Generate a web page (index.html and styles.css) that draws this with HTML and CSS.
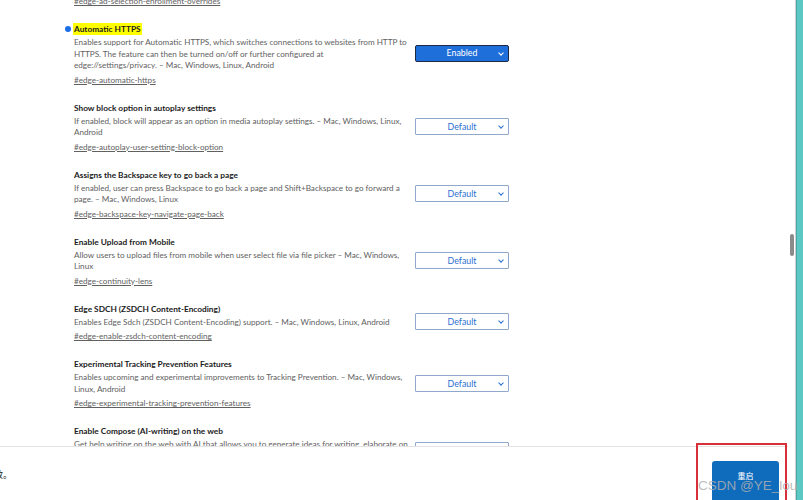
FILE: index.html
```html
<!DOCTYPE html>
<html>

<head>
    <link rel="stylesheet" href="styles.css">
</head>

<body>
    <div class="window">
        <div class="page">
            <div class="flags">
                <div class="tail">
                    <a class="flag-link" href="#">#edge-ad-selection-enrollment-overrides</a>
                </div>

                <div class="flag">
                    <div class="flag-text">
                        <div class="flag-title"><span class="dot"></span><mark>Automatic HTTPS</mark></div>
                        <div class="flag-desc">Enables support for Automatic HTTPS, which switches connections to websites from HTTP to HTTPS. The feature can then be turned on/off or further configured at<br>edge://settings/privacy. – Mac, Windows, Linux, Android</div>
                        <a class="flag-link" href="#">#edge-automatic-https</a>
                    </div>
                    <div class="select on">Enabled<span class="chev"></span></div>
                </div>

                <div class="flag">
                    <div class="flag-text">
                        <div class="flag-title">Show block option in autoplay settings</div>
                        <div class="flag-desc">If enabled, block will appear as an option in media autoplay settings. – Mac, Windows, Linux, Android</div>
                        <a class="flag-link" href="#">#edge-autoplay-user-setting-block-option</a>
                    </div>
                    <div class="select">Default<span class="chev"></span></div>
                </div>

                <div class="flag">
                    <div class="flag-text">
                        <div class="flag-title">Assigns the Backspace key to go back a page</div>
                        <div class="flag-desc">If enabled, user can press Backspace to go back a page and Shift+Backspace to go forward a page. – Mac, Windows, Linux</div>
                        <a class="flag-link" href="#">#edge-backspace-key-navigate-page-back</a>
                    </div>
                    <div class="select">Default<span class="chev"></span></div>
                </div>

                <div class="flag">
                    <div class="flag-text">
                        <div class="flag-title">Enable Upload from Mobile</div>
                        <div class="flag-desc">Allow users to upload files from mobile when user select file via file picker – Mac, Windows, Linux</div>
                        <a class="flag-link" href="#">#edge-continuity-lens</a>
                    </div>
                    <div class="select">Default<span class="chev"></span></div>
                </div>

                <div class="flag">
                    <div class="flag-text">
                        <div class="flag-title">Edge SDCH (ZSDCH Content-Encoding)</div>
                        <div class="flag-desc">Enables Edge Sdch (ZSDCH Content-Encoding) support. – Mac, Windows, Linux, Android</div>
                        <a class="flag-link" href="#">#edge-enable-zsdch-content-encoding</a>
                    </div>
                    <div class="select">Default<span class="chev"></span></div>
                </div>

                <div class="flag">
                    <div class="flag-text">
                        <div class="flag-title">Experimental Tracking Prevention Features</div>
                        <div class="flag-desc">Enables upcoming and experimental improvements to Tracking Prevention. – Mac, Windows, Linux, Android</div>
                        <a class="flag-link" href="#">#edge-experimental-tracking-prevention-features</a>
                    </div>
                    <div class="select">Default<span class="chev"></span></div>
                </div>

                <div class="flag">
                    <div class="flag-text">
                        <div class="flag-title">Enable Compose (AI-writing) on the web</div>
                        <div class="flag-desc">Get help writing on the web with AI that allows you to generate ideas for writing, elaborate on your thoughts and polish your text. – Mac, Windows, Linux</div>
                        <a class="flag-link" href="#">#edge-compose</a>
                    </div>
                    <div class="select">Default<span class="chev"></span></div>
                </div>
            </div>

            <div class="restart-bar">
                <div class="restart-msg"><span>你的更改将在你重新启动 Microsoft Edge 后生效。</span></div>
                <button class="restart-btn">重启</button>
                <div class="highlight-box"></div>
            </div>
        </div>

        <div class="scroll">
            <div class="thumb"></div>
        </div>
        <div class="edge-strip"></div>

        <div class="watermark">CSDN @YE_lou</div>
    </div>
</body>

</html>
```

FILE: styles.css
```css
html,
body {
    margin: 0;
    height: 500px;
    overflow: hidden;
    background: #fff;
}

.window {
    position: relative;
    display: flex;
    height: 500px;
    font-family: Lato, 'Open Sans', sans-serif;
}

.page {
    flex: 1;
    position: relative;
    overflow: hidden;
}

.flags {
    padding-left: 74px;
    margin-top: -7px;
}

.tail {
    line-height: 12px;
    margin-bottom: 15px;
}

.flag {
    display: flex;
    align-items: center;
    margin-bottom: 15px;
}

.flag-text {
    width: 335px;
    margin-right: 6px;
}

.flag-title {
    position: relative;
    font-size: 8.3px;
    font-weight: 700;
    line-height: 14px;
    color: #1b1b1b;
}

.flag-title mark {
    background: #ffff00;
    color: #1b1b1b;
    padding: 1px 1px;
    margin-left: -1px;
}

.dot {
    position: absolute;
    left: -9px;
    top: 4px;
    width: 6px;
    height: 6px;
    border-radius: 50%;
    background: #1a6ee6;
}

.flag-desc {
    margin-top: 1px;
    font-size: 8.15px;
    line-height: 11.5px;
    color: #616161;
}

.flag-link {
    display: block;
    margin-top: 2px;
    font-size: 8.15px;
    line-height: 12px;
    color: #616161;
}

.select {
    position: relative;
    box-sizing: border-box;
    width: 94px;
    height: 17px;
    border: 1px solid #8fa8cc;
    border-radius: 1px;
    background: #fff;
    color: #2a6fd0;
    font-size: 8.8px;
    line-height: 15px;
    text-align: center;
}

.select.on {
    background: #1f6fda;
    border: 1.5px solid #1c2a44;
    border-radius: 2px;
    color: #fff;
    line-height: 14px;
}

.chev {
    position: absolute;
    right: 5px;
    top: 5px;
    width: 3px;
    height: 3px;
    border-right: 1px solid currentColor;
    border-bottom: 1px solid currentColor;
    transform: rotate(45deg);
}

.restart-bar {
    position: absolute;
    left: 0;
    right: 0;
    bottom: 0;
    height: 53px;
    background: #fff;
    border-top: 1px solid #e3e3e3;
    display: flex;
    align-items: flex-start;
}

.restart-msg {
    width: 12px;
    overflow: hidden;
    display: flex;
    justify-content: flex-end;
    margin-top: 22px;
    font-family: 'Noto Sans CJK SC', sans-serif;
    font-size: 9px;
    line-height: 12px;
    color: #1b1b1b;
    white-space: nowrap;
}

.restart-msg span {
    flex-shrink: 0;
}

.restart-btn {
    margin-left: 700px;
    margin-top: 14px;
    width: 67px;
    height: 42px;
    padding: 9px 0 0;
    border: none;
    border-radius: 3px;
    background: #0f6cbd;
    color: #fff;
    font-family: 'Noto Sans CJK SC', sans-serif;
    font-size: 8px;
    line-height: 12px;
    display: flex;
    justify-content: center;
}

.highlight-box {
    position: absolute;
    left: 696px;
    top: -4px;
    width: 87px;
    height: 60px;
    border: 2px solid #d8303a;
}

.watermark {
    position: absolute;
    left: 698px;
    top: 478px;
    font-family: 'Liberation Sans', sans-serif;
    font-size: 13.5px;
    color: rgba(175, 175, 175, 0.85);
    white-space: nowrap;
}

.scroll {
    width: 8px;
    border-right: 1px solid #cfcfcf;
    padding-top: 234px;
    box-sizing: border-box;
    display: flex;
    justify-content: center;
}

.thumb {
    width: 4px;
    height: 22px;
    border-radius: 2px;
    background: #8b8b8b;
}

.edge-strip {
    width: 6px;
    background: #5cc8c4;
    border-left: 1px solid #4aa9a6;
}
```
